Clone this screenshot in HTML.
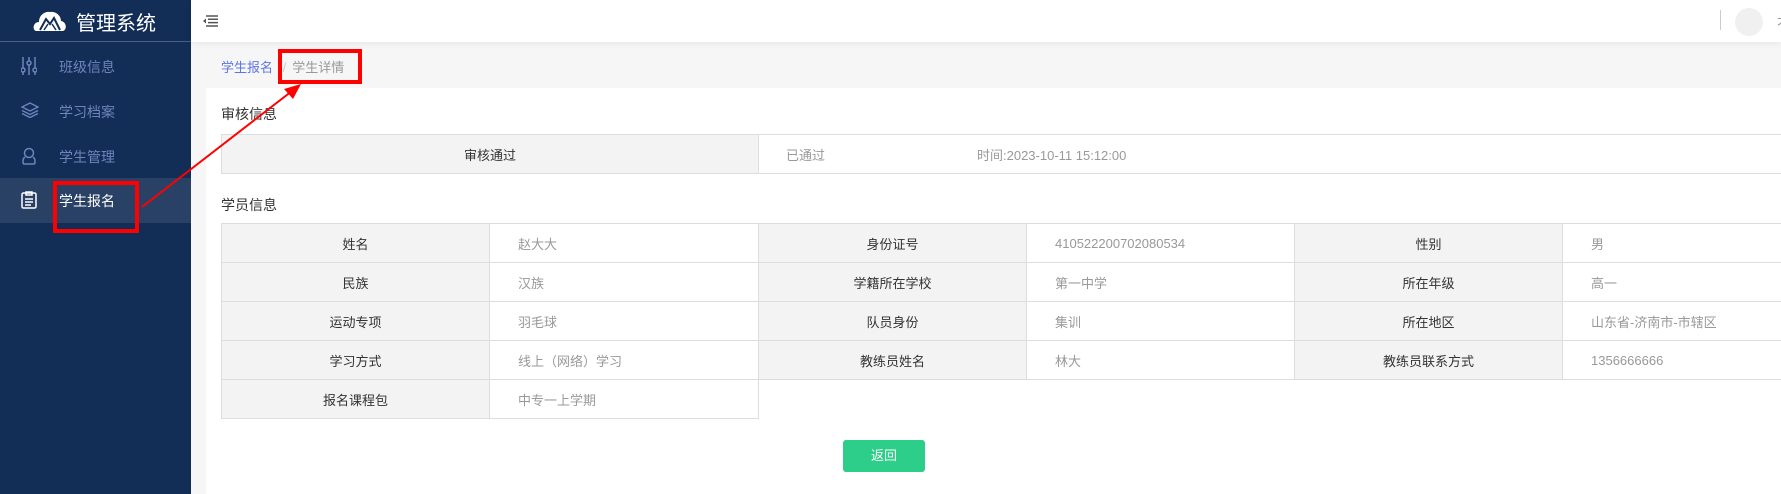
<!DOCTYPE html>
<html><head><meta charset="utf-8"><style>
*{margin:0;padding:0;box-sizing:border-box}
body{width:1781px;height:494px;overflow:hidden;background:#f6f6f6;font-family:"Liberation Sans","Noto Sans CJK SC",sans-serif;position:relative}
.side{position:absolute;left:0;top:0;width:191px;height:494px;background:#122d56}
.logo{height:42px;border-bottom:1px solid #4a5f82;position:relative}
.logo span{position:absolute;left:76px;top:7px;color:#fff;font-size:20px}
.mi{position:absolute;left:0;width:191px;height:45px;color:#6d84bd;font-size:14px}
.mi span{position:absolute;left:59px;top:13px}
.mi svg{position:absolute;left:21px;top:13px}
.act{background:#2a4166;color:#fff}
.hdr{position:absolute;left:191px;top:0;right:0;height:42px;background:#fff;box-shadow:0 2px 6px rgba(0,0,0,.06)}
.bc{position:absolute;left:221px;top:57px;font-size:13px}
.card{position:absolute;left:206px;top:88px;right:0;bottom:0;background:#fff}
.h{position:absolute;left:221px;font-size:14px;color:#333}
table{position:absolute;border-collapse:collapse;font-size:13px;table-layout:fixed}
td{border:1px solid #ddd;height:39px;padding:0}
td.l{background:#f3f3f3;color:#333;text-align:center}
td.v{color:#999;padding-left:28px}
</style></head><body>
<div class="side">
 <div class="logo">
  <svg style="position:absolute;left:33px;top:10px" width="34" height="22" viewBox="0 0 34 22"><path d="M3 21 C-1 20 0 12 6 12 C6 5 12 1 17 2 C22 1 28 5 28 11 C34 12 34 20 30 21 Z" fill="#fff"/><path d="M7 20 L13 9 L17 14 L21 8 L27 20" stroke="#122d56" stroke-width="2" fill="none"/><path d="M11 20 L15 14 M23 20 L19 14" stroke="#122d56" stroke-width="1.5"/></svg>
  <span>管理系统</span>
 </div>
 <div class="mi" style="top:44px"><svg width="16" height="18" viewBox="0 0 16 18" stroke="#6d84bd" stroke-width="1.5" fill="none"><path d="M2 0V18M8 0V18M14 0V18"/><circle cx="2" cy="13" r="2" fill="#122d56"/><circle cx="8" cy="6" r="2" fill="#122d56"/><circle cx="14" cy="13" r="2" fill="#122d56"/></svg><span>班级信息</span></div>
 <div class="mi" style="top:89px"><svg width="18" height="16" viewBox="0 0 18 16" stroke="#6d84bd" stroke-width="1.4" fill="none"><path d="M9 1L17 5L9 9L1 5Z"/><path d="M1 8.5L9 12.5L17 8.5M1 11.5L9 15.5L17 11.5"/></svg><span>学习档案</span></div>
 <div class="mi" style="top:134px"><svg width="16" height="18" viewBox="0 0 16 18" stroke="#6d84bd" stroke-width="1.5" fill="none"><circle cx="8" cy="6" r="4.5"/><path d="M4 10C1 12 2 17 3 17H13C14 17 15 12 12 10"/></svg><span>学生管理</span></div>
 <div class="mi act" style="top:178px"><svg width="16" height="18" viewBox="0 0 16 18" stroke="#fff" stroke-width="1.5" fill="none"><rect x="1" y="2" width="14" height="15" rx="1.5"/><path d="M5 1H11V4H5Z M4 8H12M4 11H12M4 14H10"/></svg><span>学生报名</span></div>
</div>
<div class="hdr">
 <svg style="position:absolute;left:12px;top:15px" width="15" height="12" viewBox="0 0 15 12"><path d="M3 1H15M5 4.3H15M5 7.6H15M3 11H15" stroke="#555" stroke-width="1.5"/><path d="M0 6L3 3.5V8.5Z" fill="#555"/></svg>
 <div style="position:absolute;left:1529px;top:10px;width:1px;height:20px;background:#ccc"></div>
 <div style="position:absolute;left:1544px;top:8px;width:28px;height:28px;border-radius:50%;background:#f0f0f0"></div>
 <span style="position:absolute;left:1586px;top:13px;font-size:13px;color:#999">不</span>
</div>
<div class="bc"><span style="color:#5f74e2">学生报名</span><span style="color:#ccc;margin:0 6px"> /</span><span style="color:#999">学生详情</span></div>
<div class="card"></div>
<div class="h" style="top:104px">审核信息</div>
<table style="left:221px;top:134px;width:1600px"><colgroup><col style="width:537px"><col></colgroup><tr><td class="l">审核通过</td><td style="color:#999;position:relative"><span style="position:absolute;left:27px;top:10px">已通过</span><span style="position:absolute;left:218px;top:10px">时间:2023-10-11 15:12:00</span></td></tr></table>
<div class="h" style="top:195px">学员信息</div>
<table style="left:221px;top:223px;width:1609px">
<colgroup><col style="width:268px"><col style="width:269px"><col style="width:268px"><col style="width:268px"><col style="width:268px"><col style="width:268px"></colgroup>
<tr><td class="l">姓名</td><td class="v">赵大大</td><td class="l">身份证号</td><td class="v">410522200702080534</td><td class="l">性别</td><td class="v">男</td></tr>
<tr><td class="l">民族</td><td class="v">汉族</td><td class="l">学籍所在学校</td><td class="v">第一中学</td><td class="l">所在年级</td><td class="v">高一</td></tr>
<tr><td class="l">运动专项</td><td class="v">羽毛球</td><td class="l">队员身份</td><td class="v">集训</td><td class="l">所在地区</td><td class="v">山东省-济南市-市辖区</td></tr>
<tr><td class="l">学习方式</td><td class="v">线上（网络）学习</td><td class="l">教练员姓名</td><td class="v">林大</td><td class="l">教练员联系方式</td><td class="v">1356666666</td></tr>
<tr><td class="l">报名课程包</td><td class="v">中专一上学期</td><td style="border:none;border-left:1px solid #ddd" colspan="4"></td></tr>
</table>
<div style="position:absolute;left:843px;top:440px;width:82px;height:32px;background:#2dcd8a;border-radius:3px;color:#fff;font-size:13px;text-align:center;line-height:32px">返回</div>
<svg style="position:absolute;left:0;top:0" width="1781" height="494">
<rect x="280" y="51" width="80" height="31" fill="none" stroke="#f00" stroke-width="4"/>
<rect x="55" y="183" width="82" height="48" fill="none" stroke="#f00" stroke-width="4"/>
<line x1="142" y1="207" x2="292" y2="91" stroke="#f00" stroke-width="2"/>
<path d="M301 84L284 89L293 99Z" fill="#f00"/>
</svg>
</body></html>
